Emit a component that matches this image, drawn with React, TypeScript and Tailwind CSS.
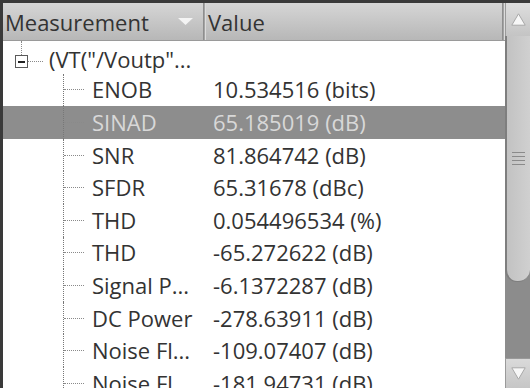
import { ReactNode } from 'react';

type Row = { name: string; value: string; selected?: boolean };

const rows: Row[] = [
  { name: 'ENOB', value: '10.534516 (bits)' },
  { name: 'SINAD', value: '65.185019 (dB)', selected: true },
  { name: 'SNR', value: '81.864742 (dB)' },
  { name: 'SFDR', value: '65.31678 (dBc)' },
  { name: 'THD', value: '0.054496534 (%)' },
  { name: 'THD', value: '-65.272622 (dB)' },
  { name: 'Signal P...', value: '-6.1372287 (dB)' },
  { name: 'DC Power', value: '-278.63911 (dB)' },
  { name: 'Noise Fl...', value: '-109.07407 (dB)' },
  { name: 'Noise Fl...', value: '-181.94731 (dB)' }
];

function HeaderCell({ children, className }: { children: ReactNode; className?: string }) {
  return (
    <div className={['flex h-full items-center', className ?? ''].join(' ')}>{children}</div>
  );
}

function Divider() {
  return (
    <div className="flex h-full">
      <div className="h-full w-px bg-[#8e8e8e]" />
      <div className="h-full w-px bg-[#a4a4a4]" />
      <div className="h-full w-px bg-[#dcdcdc]" />
    </div>
  );
}

export default function App() {
  return (
    <div
      className="flex h-[388px] w-[530px] overflow-hidden border-l-[3px] border-t-[3px] border-[#3a3a3a] bg-white text-[22px] text-[#333333]"
      style={{ fontFamily: '"Open Sans", "Noto Sans", sans-serif' }}
    >
      <div className="flex min-w-0 flex-1 flex-col">
        <header className="flex h-[38px] shrink-0 border-b border-[#9a9a9a] bg-gradient-to-b from-[#d6d6d6] to-[#b7b7b7]">
          <HeaderCell className="w-[200px] justify-between pl-[2px] pr-[10px]">
            <span className="leading-none">Measurement</span>
            <svg aria-hidden="true" width="15" height="8" viewBox="0 0 15 8">
              <path d="M0 0h15L7.5 7z" fill="#f4f4f4" />
            </svg>
          </HeaderCell>
          <Divider />
          <HeaderCell className="flex-1 pl-[2px]">
            <span className="leading-none">Value</span>
          </HeaderCell>
          <Divider />
        </header>

        <div className="flex h-[32.6px] shrink-0 items-stretch">
          <div className="flex w-[200px] items-stretch pl-[12px]">
            <div className="flex w-[13px] flex-col items-center">
              <div className="h-[14px] border-l border-dotted border-[#8a8a8a]" />
              <div className="flex h-[13px] w-[13px] items-center justify-center border border-[#5a5a5a] bg-white">
                <div className="h-[2px] w-[7px] bg-[#222]" />
              </div>
            </div>
            <div className="flex items-center pt-[8px]">
              <div className="w-[15px] border-t border-dotted border-[#8a8a8a]" />
            </div>
            <span className="ml-[6px] flex items-center whitespace-nowrap pt-[4px]">(VT("/Voutp"...</span>
          </div>
        </div>

        {rows.map((row, i) => (
          <div
            key={i}
            className={[
              'flex h-[32.6px] shrink-0 items-stretch',
              row.selected ? 'bg-[#8d8d8d] text-[#d8d8d8]' : ''
            ].join(' ')}
          >
            <div className="flex w-[200px] items-stretch pl-[60px]">
              <div className="flex items-center border-l border-dotted border-[#777777]">
                <div className="w-[20px] border-t border-dotted border-[#8a8a8a]" />
              </div>
              <span className="ml-[8px] flex items-center whitespace-nowrap">{row.name}</span>
            </div>
            <span className="flex items-center whitespace-nowrap pl-[10px]">{row.value}</span>
          </div>
        ))}
      </div>

      <div className="flex w-[25px] shrink-0 flex-col bg-[#8c8c8c]">
        <div className="flex h-[33px] shrink-0 items-center justify-center border-l border-[#9a9a9a] bg-gradient-to-b from-[#dedede] to-[#c4c4c4]">
          <svg aria-hidden="true" width="15" height="13" viewBox="0 0 15 13">
            <path d="M7.5 0.8L14.2 12.2H0.8Z" fill="#f7f7f7" stroke="#a8a8a8" strokeWidth="1" />
          </svg>
        </div>
        <div className="flex h-[246px] shrink-0 items-center justify-center rounded-b-[12px] border-b border-l-2 border-[#7e7e7e] bg-gradient-to-r from-[#c2c2c2] to-[#d0d0d0]">
          <div className="flex flex-col gap-[3px]">
            <div className="h-px w-[13px] bg-[#8a8a8a]" />
            <div className="h-px w-[13px] bg-[#8a8a8a]" />
            <div className="h-px w-[13px] bg-[#8a8a8a]" />
            <div className="h-px w-[13px] bg-[#8a8a8a]" />
          </div>
        </div>
        <div className="flex-1" />
        <div className="flex h-[30px] shrink-0 items-center justify-center border-l border-t border-[#9a9a9a] bg-gradient-to-b from-[#dadada] to-[#c6c6c6]">
          <svg aria-hidden="true" width="15" height="13" viewBox="0 0 15 13">
            <path d="M0.8 0.8H14.2L7.5 12.2Z" fill="#f7f7f7" stroke="#a8a8a8" strokeWidth="1" />
          </svg>
        </div>
      </div>
    </div>
  );
}
